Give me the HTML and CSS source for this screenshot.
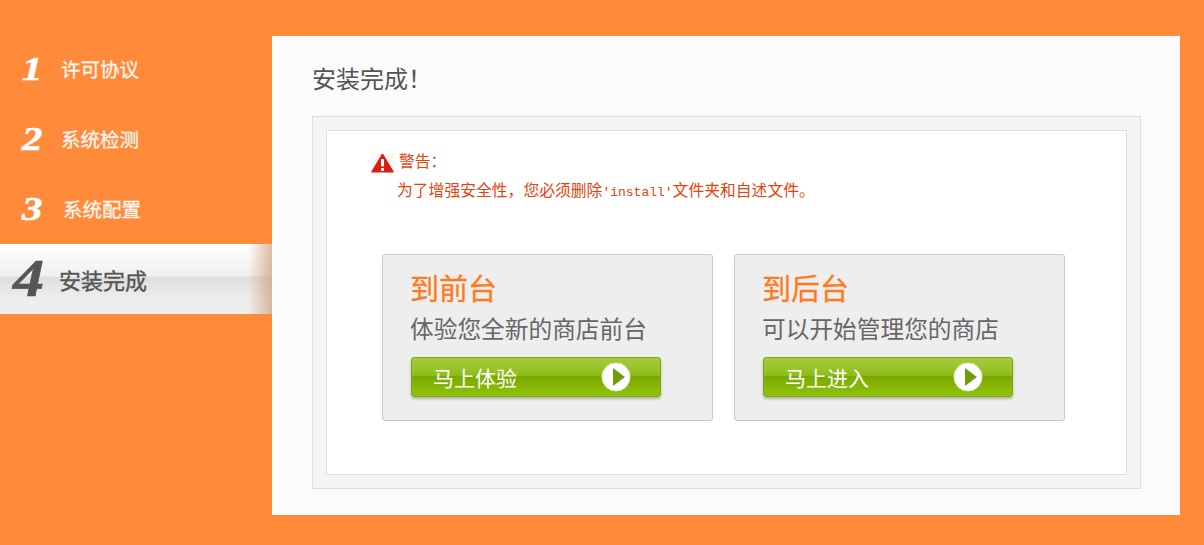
FILE: index.html
```html
<!DOCTYPE html>
<html lang="zh-CN">
<head>
    <meta charset="UTF-8">
    <title>安装完成</title>
    <link rel="stylesheet" href="styles.css">
</head>
<body>
    <div class="page">
        <ul class="steps">
            <li class="step"><span class="step-num">1</span><span class="step-name">许可协议</span></li>
            <li class="step"><span class="step-num">2</span><span class="step-name">系统检测</span></li>
            <li class="step"><span class="step-num">3</span><span class="step-name">系统配置</span></li>
            <li class="step active"><span class="step-num">4</span><span class="step-name">安装完成</span></li>
        </ul>

        <div class="panel">
            <h1>安装完成！</h1>
            <div class="box">
                <div class="box-inner">
                    <div class="warning">
                        <div class="warning-head">
                            <svg class="warning-icon" width="23" height="20" viewBox="0 0 23 20">
                                <path d="M11.5 1.5 L22 18.8 L1 18.8 Z" fill="#d81e12" stroke="#d81e12" stroke-width="1.5" stroke-linejoin="round"/>
                                <rect x="10" y="6" width="3" height="7.5" rx="1" fill="#fff"/>
                                <rect x="10" y="15" width="3" height="3" fill="#fff"/>
                            </svg>
                            <span>警告：</span>
                        </div>
                        <p>为了增强安全性，您必须删除<span class="mono">'install'</span>文件夹和自述文件。</p>
                    </div>

                    <div class="cards">
                        <div class="card">
                            <h2>到前台</h2>
                            <p>体验您全新的商店前台</p>
                            <a class="go" href="#">
                                <span>马上体验</span>
                                <svg width="30" height="30" viewBox="0 0 30 30">
                                    <circle cx="15" cy="15" r="14" fill="#fff" stroke="#e4eed0"/>
                                    <path d="M12 6 L24 15 L12 24 Z" fill="#6f9e08"/>
                                </svg>
                            </a>
                        </div>
                        <div class="card">
                            <h2>到后台</h2>
                            <p>可以开始管理您的商店</p>
                            <a class="go" href="#">
                                <span>马上进入</span>
                                <svg width="30" height="30" viewBox="0 0 30 30">
                                    <circle cx="15" cy="15" r="14" fill="#fff" stroke="#e4eed0"/>
                                    <path d="M12 6 L24 15 L12 24 Z" fill="#6f9e08"/>
                                </svg>
                            </a>
                        </div>
                    </div>
                </div>
            </div>
        </div>
    </div>
</body>
</html>
```

FILE: styles.css
```css
* {
    box-sizing: border-box;
}

body {
    margin: 0;
    background: #ff8a3a;
    font-family: "Noto Sans CJK SC", "Liberation Sans", sans-serif;
    overflow: hidden;
}

.page {
    display: flex;
    align-items: flex-start;
    width: 1204px;
    height: 545px;
}

/* left steps */
.steps {
    list-style: none;
    width: 272px;
    margin: 34px 0 0;
    padding: 0;
}

.step {
    display: flex;
    align-items: center;
    height: 70px;
    padding-left: 22px;
    color: #fff;
}

.step-num {
    display: inline-block;
    width: 39px;
    font-family: "Liberation Serif", serif;
    font-style: italic;
    font-weight: bold;
    font-size: 34px;
    line-height: 1;
    -webkit-text-stroke: 0.6px currentColor;
    transform: scaleX(1.2);
    transform-origin: left center;
}

.step-name {
    font-size: 19.5px;
    line-height: 26px;
    opacity: 0.92;
    -webkit-text-stroke: 0.3px currentColor;
}

.step:nth-child(3) .step-name {
    margin-left: 2px;
}

.step.active {
    padding-left: 13px;
    color: #555;
    background:
        linear-gradient(to right, rgba(255,138,58,0) 248px, rgba(205,150,110,0.6) 270px, rgba(205,150,110,0.6) 272px),
        linear-gradient(to bottom, #fff 0, #f0f0f0 46%, #dedede 47%, #ececec 75%, #efefef 100%);
}

.step.active .step-num {
    width: 46px;
    font-size: 52px;
    color: #555;
}

.step.active .step-name {
    font-size: 22px;
    opacity: 1;
    margin-top: 0;
    -webkit-text-stroke: 0.4px currentColor;
}

/* main panel */
.panel {
    width: 908px;
    height: 479px;
    margin-top: 36px;
    padding: 24px 39px 26px 40px;
    background: #fbfbfb;
}

h1 {
    margin: 0 0 21px;
    font-size: 24px;
    font-weight: normal;
    line-height: 35px;
    color: #555;
}

.box {
    height: 373px;
    padding: 13px;
    background: #f5f5f5;
    border: 1px solid #dedede;
}

.box-inner {
    height: 345px;
    padding: 16px 0 0 44px;
    background: #fff;
    border: 1px solid #dedede;
}

.warning {
    color: #e8420a;
    font-size: 15.8px;
    line-height: 28px;
}

.warning-head {
    display: flex;
    align-items: center;
    gap: 5px;
    height: 28px;
}

.warning-icon {
    margin-top: 4px;
    background: #fef6f4;
}

.warning p {
    margin: 1px 0 0 26px;
}

.mono {
    font-family: "Liberation Mono", monospace;
    font-size: 13px;
}

.cards {
    display: flex;
    gap: 21px;
    margin: 47px 0 0 11px;
}

.card {
    width: 331px;
    height: 167px;
    padding: 12px 0 0 28px;
    background: #eee;
    border: 1px solid #c9c9c9;
    border-radius: 3px;
}

.card h2 {
    margin: 0 0 0 -1px;
    font-size: 29px;
    font-weight: normal;
    line-height: 40px;
    color: #ff7a1c;
    -webkit-text-stroke: 0.3px currentColor;
}

.card p {
    margin: 3px 0 11px -1px;
    font-size: 23.7px;
    line-height: 36px;
    color: #666;
}

.go {
    display: flex;
    align-items: center;
    justify-content: space-between;
    width: 250px;
    height: 40px;
    padding: 0 29px 0 21px;
    border: 1px solid #79a80e;
    border-radius: 3px;
    background: linear-gradient(to bottom, #a9ca3c 0, #8fbb1c 46%, #79a900 47%, #8fc20a 100%);
    box-shadow: 0 2px 3px rgba(0,0,0,0.25);
    color: #fff;
    font-size: 21px;
    text-decoration: none;
}
```
